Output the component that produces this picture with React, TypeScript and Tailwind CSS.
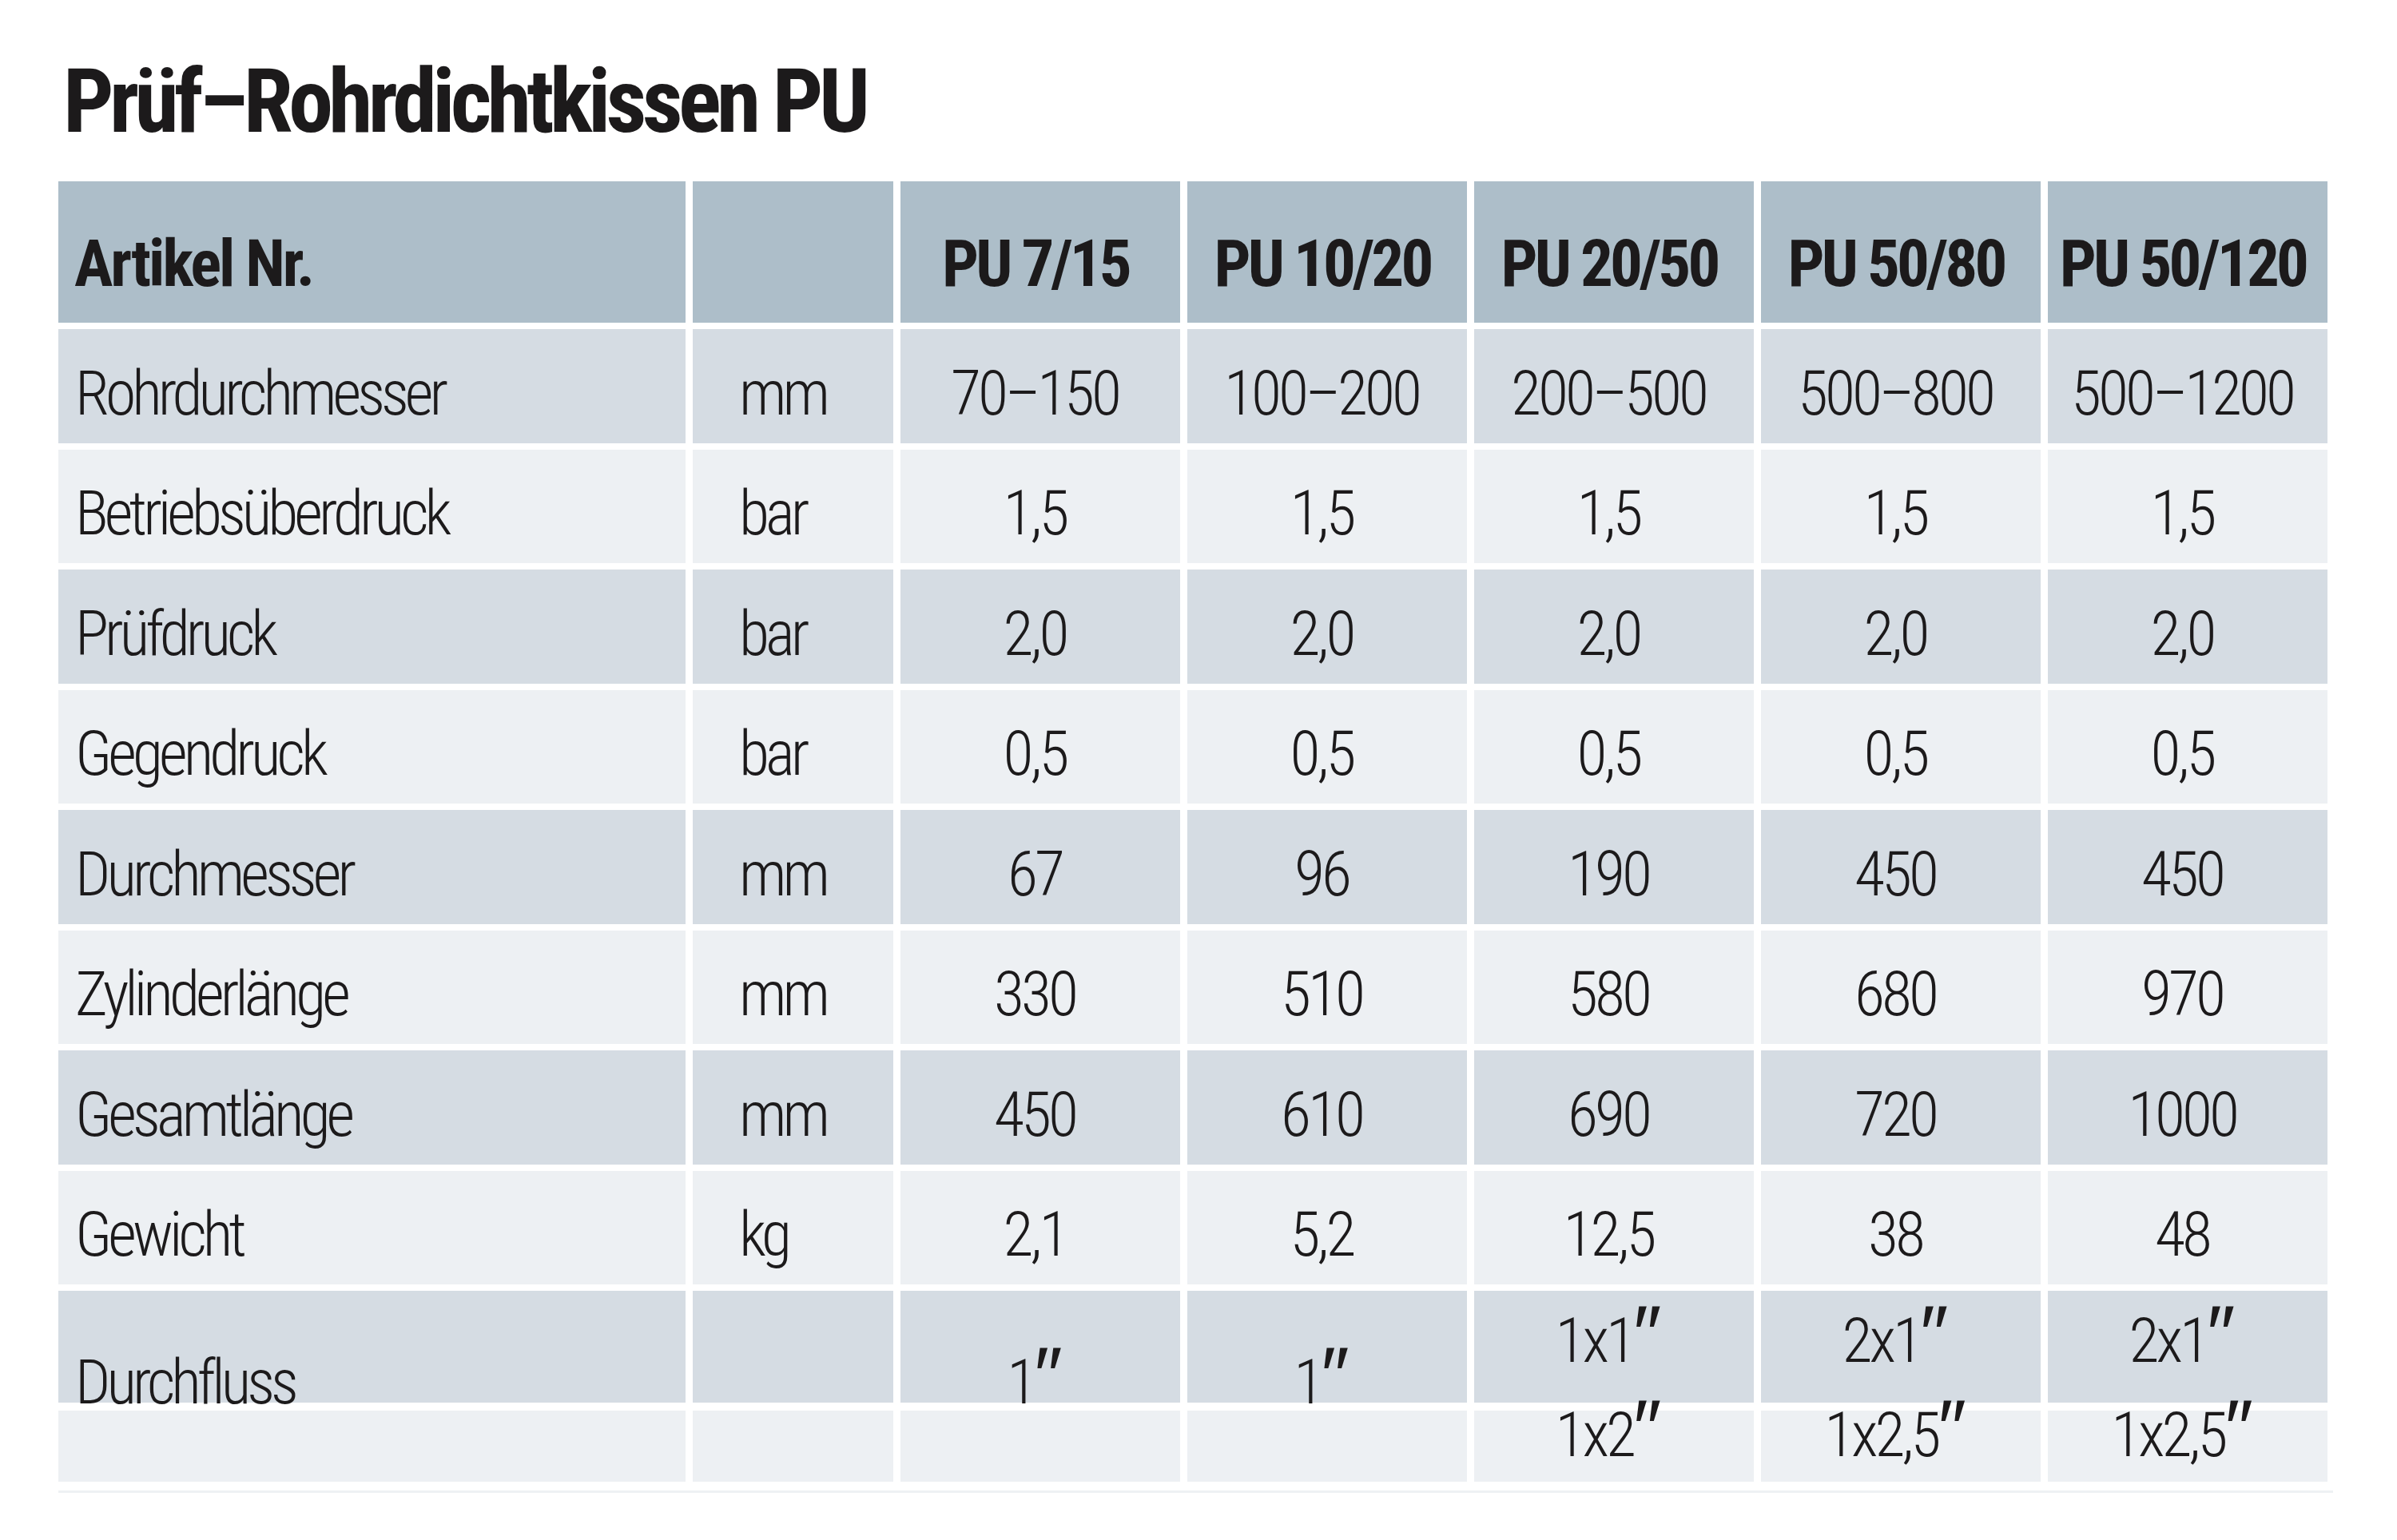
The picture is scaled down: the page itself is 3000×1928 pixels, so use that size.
const rows: { label: string; unit: string; values: string[] }[] = [
  { label: "Rohrdurchmesser", unit: "mm", values: ["70–150", "100–200", "200–500", "500–800", "500–1200"] },
  { label: "Betriebsüberdruck", unit: "bar", values: ["1,5", "1,5", "1,5", "1,5", "1,5"] },
  { label: "Prüfdruck", unit: "bar", values: ["2,0", "2,0", "2,0", "2,0", "2,0"] },
  { label: "Gegendruck", unit: "bar", values: ["0,5", "0,5", "0,5", "0,5", "0,5"] },
  { label: "Durchmesser", unit: "mm", values: ["67", "96", "190", "450", "450"] },
  { label: "Zylinderlänge", unit: "mm", values: ["330", "510", "580", "680", "970"] },
  { label: "Gesamtlänge", unit: "mm", values: ["450", "610", "690", "720", "1000"] },
  { label: "Gewicht", unit: "kg", values: ["2,1", "5,2", "12,5", "38", "48"] },
];

const models = ["PU 7/15", "PU 10/20", "PU 20/50", "PU 50/80", "PU 50/120"];
// inch sizes, the ″ mark is added when rendering
const flow: string[][] = [["1"], ["1"], ["1x1", "1x2"], ["2x1", "1x2,5"], ["2x1", "1x2,5"]];

const font = "font-['Roboto_Condensed','Liberation_Sans_Narrow','DejaVu_Sans_Condensed',sans-serif]";
const split =
  "bg-[linear-gradient(to_bottom,#d5dce3_0px,#d5dce3_140px,#ffffff_140px,#ffffff_150px,#edf0f3_150px,#edf0f3_100%)]";

function Inch({ v }: { v: string }) {
  return (
    <span>
      {v}
      <span className="font-['DejaVu_Sans',sans-serif] font-extralight text-[100px] leading-[0] tracking-normal">″</span>
    </span>
  );
}

export default function App() {
  return (
    <div className={`w-[3000px] h-[1928px] bg-white text-[#1c1a1b] pl-[73px] pt-[71px] whitespace-nowrap ${font}`}>
      <h1 className="text-[112px] leading-none font-bold tracking-[-5.6px] pl-[6px]">Prüf–Rohrdichtkissen PU</h1>

      <div className="mt-[44px] w-[2840px] grid grid-cols-[785px_251px_repeat(5,350px)] gap-x-[9px] gap-y-[8px] font-light">
        {/* Header */}
        <div className="h-[177px] bg-[#adbec9] flex items-center pt-[30px] pl-[20px] text-[81px] font-bold tracking-[-3px]">
          Artikel Nr.
        </div>
        <div className="h-[177px] bg-[#adbec9]" />
        {models.map((m) => (
          <div
            key={m}
            className="h-[177px] bg-[#adbec9] flex items-center justify-center pt-[30px] pr-[12px] text-[81px] font-bold tracking-[-3.8px]"
          >
            {m}
          </div>
        ))}

        {/* Body */}
        {rows.map((r, i) => {
          const bg = i % 2 === 0 ? "bg-[#d5dce3]" : "bg-[#edf0f3]";
          return [
            <div key={r.label} className={`h-[142.5px] ${bg} flex items-center pt-[18px] pl-[21px] text-[78px] tracking-[-5px]`}>
              {r.label}
            </div>,
            <div key={r.label + "-u"} className={`h-[142.5px] ${bg} flex items-center pt-[18px] pl-[58px] text-[78px] tracking-[-5px]`}>
              {r.unit}
            </div>,
            ...r.values.map((v, j) => (
              <div
                key={r.label + j}
                className={`h-[142.5px] ${bg} flex items-center justify-center pt-[18px] pr-[14px] text-[78px] tracking-[-4px]`}
              >
                {v}
              </div>
            )),
          ];
        })}

        {/* Durchfluss, two sub-rows */}
        <div className={`h-[239px] ${split} flex items-center pb-[10px] pl-[21px] text-[78px] tracking-[-5px]`}>Durchfluss</div>
        <div className={`h-[239px] ${split}`} />
        {flow.map((lines, j) => (
          <div
            key={j}
            className={`h-[239px] ${split} flex flex-col items-center justify-center pr-[14px] text-[78px] tracking-[-4px] ${
              lines.length > 1 ? "leading-[118px] pt-[5px]" : "pb-[10px]"
            }`}
          >
            {lines.map((l) => (
              <Inch key={l} v={l} />
            ))}
          </div>
        ))}
      </div>

      <div className="mt-[11px] w-[2847px] h-[3px] bg-[#eef1f4]" />
    </div>
  );
}
